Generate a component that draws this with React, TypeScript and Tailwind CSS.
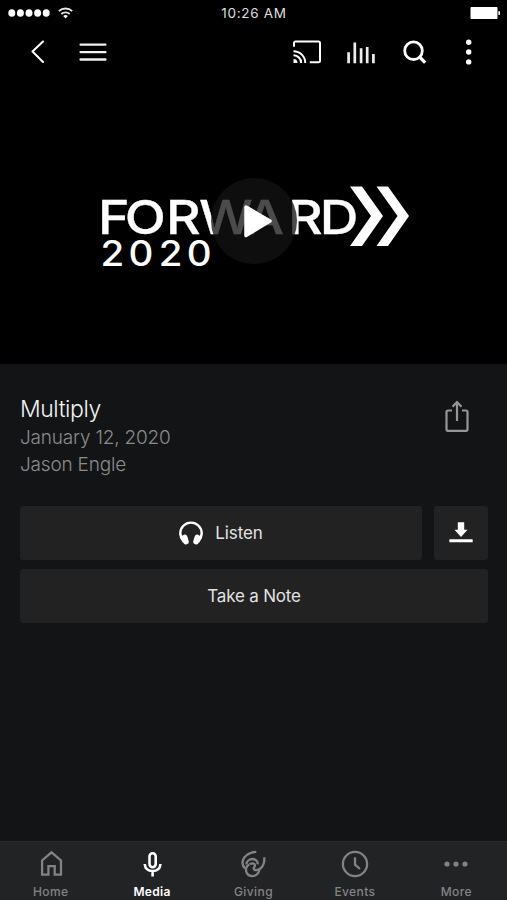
import { useState } from "react";

const TABS = ["Home", "Media", "Giving", "Events", "More"] as const;
type Tab = (typeof TABS)[number];

function StatusBar() {
  return (
    <div className="grid h-[26px] grid-cols-3 items-center pl-2 pr-[7px]">
      <div className="flex items-center gap-2">
        <svg width="42" height="8" viewBox="0 0 42 8" fill="white">
          {[3.8, 12.4, 21, 29.6, 38.2].map((cx) => (
            <ellipse key={cx} cx={cx} cy="4" rx="3.5" ry="3.8" />
          ))}
        </svg>
        <svg width="15" height="12" viewBox="0 0 15 12" fill="none" stroke="#e8e8e8" strokeWidth="1.8">
          <path d="M0.8 4.2a9.6 9.6 0 0 1 13.4 0" />
          <path d="M3.3 7a6.1 6.1 0 0 1 8.4 0" />
          <path d="M5.2 9a3.3 3.3 0 0 1 4.6 0L7.5 11.5z" fill="white" stroke="none" />
        </svg>
      </div>
      <span className="mt-[1px] whitespace-nowrap text-center text-[13.5px] leading-none tracking-[0.7px] text-[#dedede]">
        10:26 AM
      </span>
      <svg className="justify-self-end" width="30" height="12" viewBox="0 0 30 12" fill="white">
        <rect x="0.5" width="27" height="12" rx="1" />
        <path d="M28.4 4a2 2 0 0 1 0 4z" />
      </svg>
    </div>
  );
}

function Toolbar() {
  return (
    <header className="flex h-[52px] items-center pl-[30px] pr-[35px]">
      <button type="button" aria-label="Back">
        <svg width="14" height="24" viewBox="0 0 14 24" fill="none" stroke="white" strokeWidth="2" strokeLinecap="round" strokeLinejoin="round">
          <path d="M13 1.500 2.500 11.500 13 22" />
        </svg>
      </button>
      <button type="button" aria-label="Menu" className="ml-[35px]">
        <svg width="28" height="24" viewBox="0 0 28 24" stroke="#f0f0f0" strokeWidth="2.4" strokeLinecap="round">
          <path d="M1.6 4.6h24.8M1.6 12.1h24.8M1.6 19.5h24.8" />
        </svg>
      </button>
      <div className="ml-auto flex items-center">
        <button type="button" aria-label="Cast">
          <svg width="28" height="24" viewBox="0 0 28 24" fill="none" stroke="white" strokeWidth="2">
            <path d="M1 6.8V3.1Q1 1.6 2.5 1.6H25.5Q27 1.6 27 3.1V20.8Q27 22.3 25.5 22.3H16.8" />
            <path d="M0.5 11.2A11.8 11.8 0 0 1 12.3 23M0.5 15.3A7.7 7.7 0 0 1 8.2 23" />
            <path d="M0.5 19a4 4 0 0 1 4 4h-4z" fill="white" stroke="none" />
          </svg>
        </button>
        <button type="button" aria-label="Now playing" className="ml-[26px]">
          <svg width="28" height="24" viewBox="0 0 28 24" stroke="#ededed" strokeWidth="2.7">
            <path d="M1.6 12.3V23.2M7.8 2.5V23.2M14.1 8.3V23.2M20.2 7V23.2M26.4 14V23.2" />
          </svg>
        </button>
        <button type="button" aria-label="Search" className="ml-[28px]">
          <svg width="24" height="24" viewBox="0 0 24 24" fill="none" stroke="white" strokeWidth="2.8">
            <circle cx="10.5" cy="10.700" r="8.800" />
            <path d="M16.3 16.8 22.2 22.6" strokeWidth="3.3" />
          </svg>
        </button>
        <button type="button" aria-label="Options" className="ml-[39px]">
          <svg width="6" height="26" viewBox="0 0 6 26" fill="white">
            <circle cx="2.700" cy="3.2" r="2.7" />
            <circle cx="2.700" cy="13" r="2.7" />
            <circle cx="2.700" cy="22.9" r="2.7" />
          </svg>
        </button>
      </div>
    </header>
  );
}

function VideoPoster() {
  return (
    <section className="h-[286px]">
      <svg width="507" height="286" viewBox="0 78 507 286" fill="white">
        <g className="font-['Inter','Liberation_Sans',sans-serif]">
          <text
            transform="scale(1.14 1)"
            y="234"
            fontSize="47"
            fontWeight="500"
            stroke="white"
            strokeWidth="0.3"
            x="86 109.4 145.6 174.6 215.8 252.6 280.4"
          >
            FORWARD
          </text>
          <text
            transform="scale(1.1 1)"
            y="266.5"
            fontSize="35"
            fontWeight="500"
            x="91.3 116.8 144.3 169.8"
          >
            2020
          </text>
        </g>
        <path d="M350 186.5h12L383 216 362 246H350L371 216zM376.5 186.5h11.5L409 216 388 246H376.5L397.5 216z" />
        <circle cx="254" cy="221" r="43" fill="#121212" fillOpacity="0.76" />
        <path d="M246 207 270 221 246 235.5z" stroke="white" strokeWidth="3.5" strokeLinejoin="round" />
      </svg>
    </section>
  );
}

function TabIcon({ name }: { name: Tab }) {
  return (
    <svg width="30" height="30" viewBox="0 0 30 30" fill="none" stroke="currentColor" strokeWidth="2.3">
      {name === "Home" && (
        <path d="M6.1 25.7V11.5L15.5 3.3l9.5 8.2v14.2h-6.3v-8.500h-6.300v8.500z" />
      )}
      {name === "Media" && (
        <>
          <rect x="12.5" y="4.2" width="6.2" height="14" rx="3.1" strokeWidth="2.6" />
          <path d="M7.7 15c.4 4.500 3.500 7 7.900 7s7.500-2.500 7.900-7M15.600 22v5.500" strokeWidth="2.6" />
        </>
      )}
      {name === "Giving" && (
        <>
          <path d="M18.300 2.800C10 3.100 4.300 8.600 4.500 14.100c.1 2.700 1.300 4.200 2.600 5.300" />
          <path d="M8.300 15.400c.5-3.600 3.300-5.600 6.500-5.400 3.200.2 5.200 2.600 4.900 5.400" />
          <path d="M11.800 15.400c1.800-1.600 4.600-1.300 5.100.5.400 1.700-1.300 2.300-1.200 3.800.2 2.200 4.900 1.600 7.400-.8 2.800-2.700 3.500-6 3.200-10.600" />
          <path d="M11.300 15.500c-3.700 1.400-4 6-2.300 8.900 2.200 3.600 8 3.500 10.800.1 1-1.200 1.400-2.400 1.500-3.900" />
        </>
      )}
      {name === "Events" && (
        <>
          <circle cx="15" cy="15" r="12.1" />
          <path d="M15 8.300v7.400l5 4.300" />
        </>
      )}
      {name === "More" && (
        <g fill="currentColor" stroke="none">
          <circle cx="6" cy="15" r="2.6" />
          <circle cx="15" cy="15" r="2.6" />
          <circle cx="24" cy="15" r="2.6" />
        </g>
      )}
    </svg>
  );
}

export default function App() {
  const [activeTab, setActiveTab] = useState<Tab>("Media");

  return (
    <div className="flex h-[900px] w-[507px] flex-col overflow-hidden bg-[#131416] font-['Inter','Liberation_Sans',sans-serif]">
      <div className="bg-black">
        <StatusBar />
        <Toolbar />
        <VideoPoster />
      </div>

      <main className="flex-1 pl-5 pr-[19px] pt-[30px]">
        <div className="flex h-28 justify-between">
          <div>
            <h1 className="text-[23px] font-light leading-[30px] tracking-[-0.45px] text-[#f2f2f2]">
              Multiply
            </h1>
            <p className="text-[19px] font-light leading-[27px] tracking-[-0.2px] text-[#8b8c8d]">
              January 12, 2020
            </p>
            <p className="text-[19px] font-light leading-[27px] tracking-[-0.2px] text-[#8b8c8d]">
              Jason Engle
            </p>
          </div>
          <button type="button" aria-label="Share" className="mr-[19px] mt-1.5 self-start">
            <svg width="24" height="33" viewBox="0 0 24 33" fill="none" stroke="#969697" strokeWidth="2.2">
              <path d="M7 10.5H3Q1.500 10.500 1.500 12V29.300Q1.500 30.800 3 30.800H21Q22.500 30.800 22.500 29.300V12Q22.500 10.500 21 10.500H17" />
              <path d="M12 21V3M7.500 6.800 12 2.100 16.500 6.800" />
            </svg>
          </button>
        </div>

        <div className="flex gap-3">
          <button
            type="button"
            className="flex h-[54px] w-[402px] items-center justify-center gap-3 rounded-[3px] bg-[#222222] text-[17px] tracking-[-0.1px] text-[#e2e2e2]"
          >
            <svg width="24" height="24" viewBox="0 0 24 24" fill="none" stroke="white" strokeWidth="2.4">
              <path d="M4.500 19.500C2.500 17.500 1.300 15 1.300 12.300a10.700 10.700 0 0 1 21.400 0c0 2.700-1.200 5.200-3.200 7.200" />
              <path d="M2 15.500 5.200 21M22 15.500 18.800 21" strokeWidth="3" />
              <rect x="3.500" y="13.500" width="5.600" height="10" rx="2.800" fill="white" stroke="none" transform="rotate(-17 6.200 18.500)" />
              <rect x="14.900" y="13.500" width="5.600" height="10" rx="2.800" fill="white" stroke="none" transform="rotate(17 17.800 18.500)" />
            </svg>
            <span className="pt-[2px]">Listen</span>
          </button>
          <button
            type="button"
            aria-label="Download"
            className="flex h-[54px] flex-1 items-center justify-center rounded-[3px] bg-[#222222]"
          >
            <svg width="24" height="22" viewBox="0 0 24 22" fill="white">
              <path d="M8.800 0.300h6.400v7.500h3.300L12 15 5.500 7.800h3.300z" />
              <rect x="0.300" y="17.300" width="23.400" height="2.900" rx="0.500" />
            </svg>
          </button>
        </div>
        <button
          type="button"
          className="mt-[9px] flex h-[54px] w-full items-center justify-center rounded-[3px] bg-[#222222] pt-[2px] text-[17px] tracking-[-0.2px] text-[#e2e2e2]"
        >
          Take a Note
        </button>
      </main>

      <nav className="grid h-[59px] grid-cols-5 border-t border-[#28292b] bg-[#222325]">
        {TABS.map((tab) => (
          <button
            key={tab}
            type="button"
            onClick={() => setActiveTab(tab)}
            className={`flex flex-col items-center pt-[7px] text-xs leading-[15px] ${
              tab === activeTab
                ? "font-semibold tracking-[0.3px] text-white"
                : "font-medium tracking-[0.4px] text-[#838384]"
            }`}
          >
            <TabIcon name={tab} />
            <span className="mt-[5px] whitespace-nowrap">{tab}</span>
          </button>
        ))}
      </nav>
    </div>
  );
}
